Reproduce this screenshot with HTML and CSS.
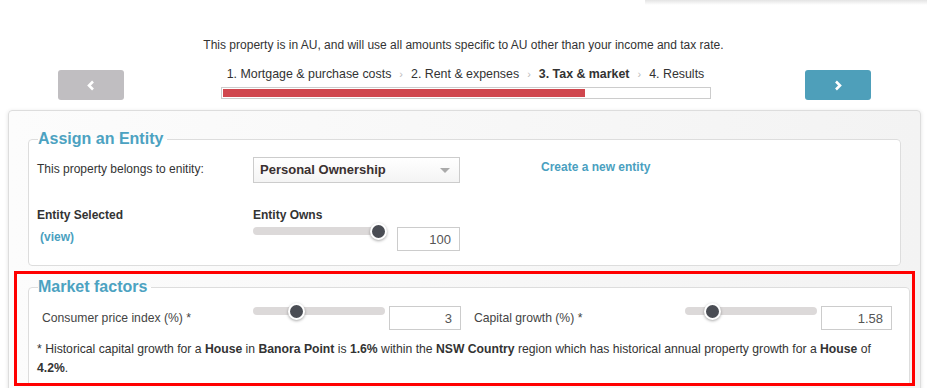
FILE: index.html
```html
<!DOCTYPE html>
<html lang="en">
<head>
  <meta charset="UTF-8" />
  <title>Property wizard - Tax &amp; market</title>
  <link rel="stylesheet" href="styles.css">
</head>
<body>
  <div class="top-card"></div>

  <p class="intro">This property is in AU, and will use all amounts specific to AU other than your income and tax rate.</p>

  <div class="wizard">
    <button class="nav-btn prev">
      <svg width="8" height="11" viewBox="0 0 8 11"><polyline points="6,1.5 2,5.5 6,9.5" fill="none" stroke="#fff" stroke-width="2.6"/></svg>
    </button>
    <div class="steps">
      <div class="step-list">
        <span>1. Mortgage &amp; purchase costs</span>
        <span class="sep">›</span>
        <span>2. Rent &amp; expenses</span>
        <span class="sep">›</span>
        <span class="current">3. Tax &amp; market</span>
        <span class="sep">›</span>
        <span>4. Results</span>
      </div>
      <div class="progress"><div class="progress-fill" style="width: 74.5%"></div></div>
    </div>
    <button class="nav-btn next">
      <svg width="8" height="11" viewBox="0 0 8 11"><polyline points="2,1.5 6,5.5 2,9.5" fill="none" stroke="#fff" stroke-width="2.6"/></svg>
    </button>
  </div>

  <div class="panel">
    <fieldset class="group">
      <legend>Assign an Entity</legend>
      <div class="entity-row">
        <div class="col-label">This property belongs to enitity:</div>
        <div class="select">Personal Ownership<span class="caret"></span></div>
        <a class="link new-entity" href="#">Create a new entity</a>
      </div>
      <div class="entity-row second">
        <div class="col-label">
          <div class="bold">Entity Selected</div>
          <a class="link view" href="#">(view)</a>
        </div>
        <div>
          <div class="bold">Entity Owns</div>
          <div class="slider-row">
            <div class="track"><span class="thumb" style="left: 100%"></span></div>
            <div class="num wide">100</div>
          </div>
        </div>
      </div>
    </fieldset>

    <div class="highlight">
      <fieldset class="group market">
        <legend>Market factors</legend>
        <div class="market-row">
          <div class="factor">
            <div class="factor-label">Consumer price index (%) *</div>
            <div class="track"><span class="thumb" style="left: 33%"></span></div>
            <div class="num">3</div>
          </div>
          <div class="factor">
            <div class="factor-label">Capital growth (%) *</div>
            <div class="track"><span class="thumb" style="left: 21%"></span></div>
            <div class="num">1.58</div>
          </div>
        </div>
        <p class="note">* Historical capital growth for a <b>House</b> in <b>Banora Point</b> is <b>1.6%</b> within the <b>NSW Country</b> region which has historical annual property growth for a <b>House</b> of <b>4.2%</b>.</p>
      </fieldset>
    </div>
  </div>
</body>
</html>
```

FILE: styles.css
```css
body {
  margin: 0;
  background: #fff;
  font-family: "Liberation Sans", Arial, sans-serif;
  font-size: 12px;
  color: #333;
  overflow: hidden;
}

.top-card {
  height: 5px;
  margin-left: 645px;
  background: linear-gradient(#e4e4e4, #fff);
}

.intro { margin: 32px 0 0; text-align: center; line-height: 16px; }

.wizard {
  display: flex;
  align-items: flex-start;
  margin-top: 17px;
  padding: 0 56px 0 58px;
}
.nav-btn {
  width: 66px;
  height: 30px;
  border: none;
  border-radius: 3px;
  display: flex;
  align-items: center;
  justify-content: center;
  cursor: pointer;
}
.nav-btn.prev { background: #c0bec1; }
.nav-btn.next { background: #4e9fba; }

.steps { flex: 1; display: flex; flex-direction: column; align-items: center; margin-top: -3px; }
.step-list { display: flex; gap: 8px; font-size: 12.4px; line-height: 14px; margin-left: 2px; }
.step-list .current { font-weight: bold; }
.step-list .sep { color: #bbb; font-size: 11px; }
.progress {
  width: 486px;
  height: 8px;
  margin-top: 6px;
  border: 1px solid #ccc;
  padding: 1px;
  margin-left: 2px;
}
.progress-fill { height: 100%; background: #d0474e; }

.panel {
  margin: 10px 6px 0 8px;
  padding: 18px 19px 0;
  border: 1px solid #ddd;
  border-radius: 4px;
  background: linear-gradient(to right, #fcfcfc, #f3f3f3);
  box-shadow: 0 1px 4px rgba(0,0,0,0.12);
  height: 300px;
}

.group {
  margin: 0;
  padding: 8px 8px 14px;
  border: 1px solid #ddd;
  border-radius: 4px;
  background: #fff;
}
.group legend {
  padding: 0 4px 0 0;
  margin-left: 1px;
  font-size: 16px;
  font-weight: bold;
  color: #4ca2c1;
  line-height: 20px;
}

.entity-row { display: flex; align-items: flex-start; }
.col-label { width: 216px; line-height: 14px; padding-top: 5px; }
.select {
  position: relative;
  width: 199px;
  height: 24px;
  padding-left: 6px;
  border: 1px solid #ccc;
  background: linear-gradient(#fff, #f4f4f4);
  font-size: 13px;
  font-weight: bold;
  line-height: 24px;
  color: #3a3030;
}
.caret {
  position: absolute;
  right: 9px;
  top: 10px;
  border-left: 5px solid transparent;
  border-right: 5px solid transparent;
  border-top: 5px solid #aaa;
}
.link { color: #4a9fc0; font-weight: bold; text-decoration: none; }
.new-entity { margin-left: 81px; padding-top: 3px; }

.entity-row.second { margin-top: 25px; }
.entity-row.second .col-label { padding-top: 0; }
.bold { font-weight: bold; line-height: 14px; }
.view { display: inline-block; margin: 8px 0 0 3px; }

.slider-row { display: flex; align-items: flex-start; gap: 12px; margin-top: 5px; }
.track {
  position: relative;
  width: 132px;
  height: 8px;
  border-radius: 4px;
  background: #dcd9d9;
}
.thumb {
  position: absolute;
  top: 50%;
  width: 13px;
  height: 13px;
  margin: -8.5px 0 0 -8.5px;
  border: 2px solid #fff;
  border-radius: 50%;
  background: #4a4d54;
  box-shadow: 0 1px 3px rgba(0,0,0,0.35);
}
.slider-row .thumb { margin-left: -15px; }
.num {
  width: 53px;
  height: 22px;
  padding-right: 8px;
  border: 1px solid #ccc;
  text-align: right;
  font-size: 13px;
  line-height: 23px;
  color: #555;
}

.highlight {
  margin: 5px -14px 0;
  padding: 3px 11px 0;
  border: 3px solid #f00;
  height: 115px;
  box-sizing: border-box;
  overflow: hidden;
}
.group.market { padding: 9px 8px 10px; }
.market-row { display: flex; }
.factor { width: 432px; display: flex; align-items: flex-start; gap: 4px; }
.factor-label { width: 207px; padding: 5px 0 0 5px; font-size: 12.2px; color: #444; }
.factor .track { margin-top: 1px; }
.factor .num { width: 62px; }
.factor + .factor .num { width: 61px; }
.note { margin: 10px 0 0; line-height: 19px; font-size: 12.2px; }
```
